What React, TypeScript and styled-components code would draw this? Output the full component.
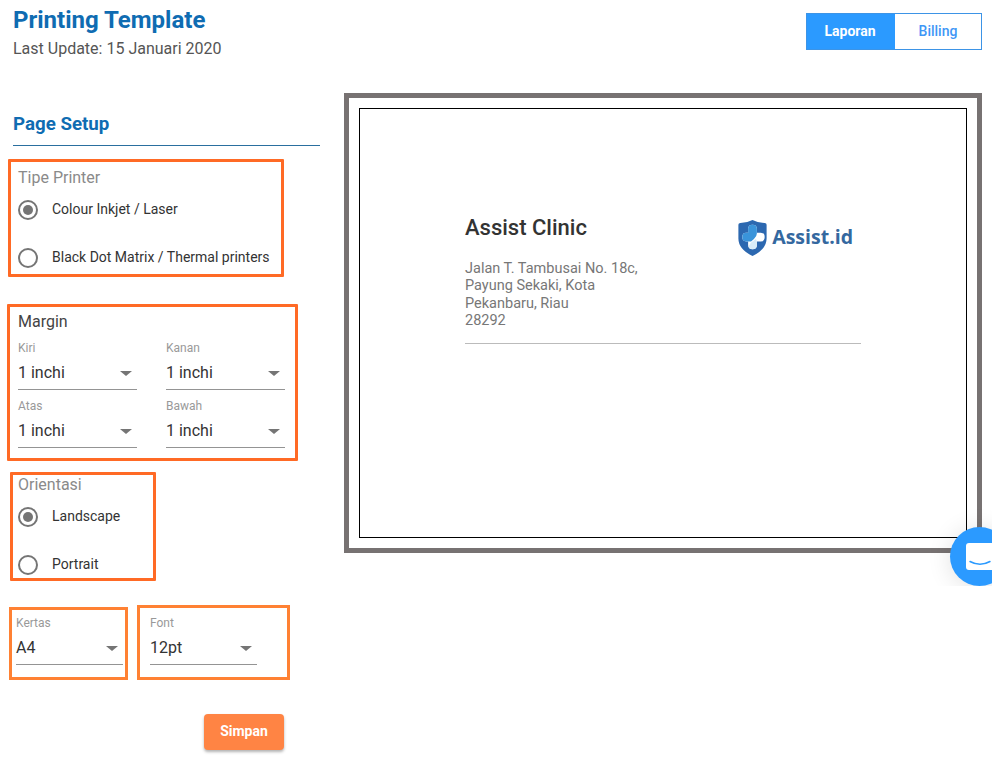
import styled, { createGlobalStyle } from 'styled-components';

const GlobalStyle = createGlobalStyle`
  html, body {
    margin: 0;
    padding: 0;
    background: white;
    font-family: Roboto, "Liberation Sans", sans-serif;
  }
`;

function Radio({ label, checked }: { label: string; checked?: boolean }) {
  return (
    <RadioRow>
      <RadioCircle>{checked && <RadioDot />}</RadioCircle>
      <RadioText>{label}</RadioText>
    </RadioRow>
  );
}

function Select({ label, value, width }: { label: string; value: string; width: number }) {
  return (
    <SelectBox $width={width}>
      <SelectLabel>{label}</SelectLabel>
      <SelectValue>
        {value}
        <Caret />
      </SelectValue>
    </SelectBox>
  );
}

function Logo() {
  return (
    <LogoWrap>
      <svg width="29" height="36" viewBox="0 0 29 37">
        <path d="M0 5 Q0 3 2 3 Q9 3 14.5 0 Q20 3 27 3 Q29 3 29 5 L29 19 Q29 30 14.5 37 Q0 30 0 19 Z" fill="#2c68b0" />
        <path d="M10 9 Q10 5 14.5 5 Q19 5 19 9 L19 13 L23 13 Q27 13 27 17.5 Q27 22 23 22 L19 22 L19 26 Q19 30 14.5 30 Q10 30 10 26 L10 22 L8 22 Q4 22 4 17.5 Q4 13 8 13 L10 13 Z" fill="#ffffff" />
        <path d="M13 22 L8 22 Q4 22 4 17.5 Q4 13 8 13 L10 13 L10 9 Q10 5 14.5 5 Q19 5 19 9 L19 14 Q19 17 16 19.5 Z" fill="#3a94da" />
        <path d="M13 23 L18 19.5 L19 22 L19 26 Q19 30 14.5 30 Q11 30 10.5 27 Z" fill="#d8ecf8" />
      </svg>
      <LogoText>Assist.id</LogoText>
    </LogoWrap>
  );
}

function App() {
  return (
    <>
      <GlobalStyle />
      <Page>
        <Header>
          <div>
            <Title>Printing Template</Title>
            <Updated>Last Update: 15 Januari 2020</Updated>
          </div>
          <Toggle>
            <ToggleButton $active>Laporan</ToggleButton>
            <ToggleButton>Billing</ToggleButton>
          </Toggle>
        </Header>
        <Body>
          <Sidebar>
            <SetupTitle>Page Setup</SetupTitle>
            <PrinterBox>
              <GroupTitle>Tipe Printer</GroupTitle>
              <RadioList>
                <Radio label="Colour Inkjet / Laser" checked />
                <Radio label="Black Dot Matrix / Thermal printers" />
              </RadioList>
            </PrinterBox>
            <MarginBox>
              <MarginTitle>Margin</MarginTitle>
              <MarginGrid>
                <Select label="Kiri" value="1 inchi" width={119} />
                <Select label="Kanan" value="1 inchi" width={119} />
                <Select label="Atas" value="1 inchi" width={119} />
                <Select label="Bawah" value="1 inchi" width={119} />
              </MarginGrid>
            </MarginBox>
            <OrientationBox>
              <GroupTitle>Orientasi</GroupTitle>
              <RadioList>
                <Radio label="Landscape" checked />
                <Radio label="Portrait" />
              </RadioList>
            </OrientationBox>
            <PaperRow>
              <PaperBox>
                <Select label="Kertas" value="A4" width={107} />
              </PaperBox>
              <FontBox>
                <Select label="Font" value="12pt" width={107} />
              </FontBox>
            </PaperRow>
            <SaveButton>Simpan</SaveButton>
          </Sidebar>
          <Preview>
            <Sheet>
              <SheetTop>
                <Clinic>
                  <ClinicName>Assist Clinic</ClinicName>
                  <Address>
                    Jalan T. Tambusai No. 18c,
                    <br />
                    Payung Sekaki, Kota
                    <br />
                    Pekanbaru, Riau
                    <br />
                    28292
                  </Address>
                </Clinic>
                <Logo />
              </SheetTop>
              <SheetLine />
            </Sheet>
          </Preview>
        </Body>
        <ChatClip>
          <ChatBubble>
            <ChatFace>
              <svg width="22" height="7" viewBox="0 0 22 7">
                <path d="M1 1.5 Q11 7 21 1.5" fill="none" stroke="#2b9aff" strokeWidth="1.5" strokeLinecap="round" />
              </svg>
            </ChatFace>
          </ChatBubble>
        </ChatClip>
      </Page>
    </>
  );
}

const Page = styled.div`
  position: relative;
  width: 994px;
  height: 776px;
  overflow: hidden;
  background: white;
`;

const Header = styled.div`
  display: flex;
  justify-content: space-between;
  align-items: flex-start;
  height: 93px;
  padding: 6px 12px 0 13px;
  box-sizing: border-box;
`;

const Title = styled.div`
  font-size: 24px;
  line-height: 28px;
  font-weight: 700;
  color: #0f6cb2;
`;

const Updated = styled.div`
  margin-top: 3px;
  font-size: 16px;
  line-height: 24px;
  color: #555555;
`;

const Toggle = styled.div`
  display: flex;
  margin-top: 7px;
  width: 176px;
  height: 37px;
  box-sizing: border-box;
  border: 1px solid #3d94e6;
`;

const ToggleButton = styled.div<{ $active?: boolean }>`
  display: flex;
  align-items: center;
  justify-content: center;
  box-sizing: border-box;
  width: ${(p) => (p.$active ? '88px' : '86px')};
  padding: ${(p) => (p.$active ? '0 2px 2px 0' : '0 0 2px 0')};
  font-size: 14px;
  font-weight: ${(p) => (p.$active ? 700 : 500)};
  color: ${(p) => (p.$active ? 'white' : '#3f97f6')};
  background: ${(p) => (p.$active ? '#2b9aff' : 'white')};
`;

const Body = styled.div`
  display: flex;
  justify-content: space-between;
  padding-right: 12px;
`;

const Sidebar = styled.div`
  width: 344px;
`;

const SetupTitle = styled.div`
  margin: 0 24px 0 13px;
  height: 53px;
  box-sizing: border-box;
  padding-top: 19px;
  border-bottom: 1px solid #2a6f9f;
  font-size: 18.72px;
  line-height: 24px;
  font-weight: 700;
  color: #0f6cb2;
`;

const OrangeBox = styled.div`
  box-sizing: border-box;
  border: 3px solid #ff6a25;
  border-radius: 1px;
`;

const PrinterBox = styled(OrangeBox)`
  width: 276px;
  height: 118px;
  margin: 13px 0 0 8px;
  padding: 6px 7px;
`;

const GroupTitle = styled.div`
  font-size: 16px;
  line-height: 19px;
  color: #8a8a8a;
`;

const RadioList = styled.div`
  display: flex;
  flex-direction: column;
  gap: 24px;
  margin-top: 11px;
`;

const RadioRow = styled.div`
  display: flex;
  align-items: center;
  height: 24px;
  gap: 14px;
`;

const RadioCircle = styled.div`
  display: flex;
  align-items: center;
  justify-content: center;
  width: 20px;
  height: 20px;
  box-sizing: border-box;
  border: 2px solid #757575;
  border-radius: 50%;
`;

const RadioDot = styled.div`
  width: 10px;
  height: 10px;
  border-radius: 50%;
  background: #757575;
`;

const RadioText = styled.div`
  margin-top: -2px;
  font-size: 14px;
  line-height: 20px;
  color: #333333;
  white-space: nowrap;
`;

const MarginBox = styled(OrangeBox)`
  width: 291px;
  height: 157px;
  margin: 27px 0 0 7px;
  padding: 5px 8px;
`;

const MarginTitle = styled.div`
  font-size: 16px;
  line-height: 19px;
  color: #444444;
`;

const MarginGrid = styled.div`
  display: grid;
  grid-template-columns: 119px 119px;
  column-gap: 29px;
  row-gap: 9px;
  margin-top: 10px;
`;

const SelectBox = styled.div<{ $width: number }>`
  width: ${(p) => p.$width}px;
`;

const SelectLabel = styled.div`
  font-size: 12px;
  line-height: 14px;
  color: #999999;
`;

const SelectValue = styled.div`
  display: flex;
  align-items: center;
  justify-content: space-between;
  height: 32px;
  margin-top: 2px;
  padding: 0 5px 0 0;
  border-bottom: 1px solid #949494;
  font-size: 16px;
  line-height: 20px;
  color: #333333;
`;

const Caret = styled.div`
  width: 0;
  height: 0;
  border-left: 6px solid transparent;
  border-right: 6px solid transparent;
  border-top: 5px solid #757575;
`;

const OrientationBox = styled(OrangeBox)`
  width: 146px;
  height: 109px;
  margin: 11px 0 0 10px;
  padding: 0 5px;
`;

const PaperRow = styled.div`
  display: flex;
  align-items: flex-end;
  gap: 9px;
  margin: 24px 0 0 9px;
`;

const PaperBox = styled.div`
  box-sizing: border-box;
  width: 119px;
  height: 73px;
  padding: 6px 4px;
  border: 3px solid #ff8133;
`;

const FontBox = styled(PaperBox)`
  width: 153px;
  height: 75px;
  padding: 8px 10px;
`;

const SaveButton = styled.div`
  display: flex;
  align-items: center;
  justify-content: center;
  box-sizing: border-box;
  width: 80px;
  height: 36px;
  margin: 34px 0 0 204px;
  padding-bottom: 2px;
  border-radius: 4px;
  background: #ff8444;
  box-shadow: 0 2px 3px rgba(0, 0, 0, 0.3);
  color: white;
  font-size: 14px;
  font-weight: 700;
`;

const Preview = styled.div`
  box-sizing: border-box;
  width: 638px;
  height: 460px;
  padding: 10px;
  border: 5px solid #777272;
`;

const Sheet = styled.div`
  box-sizing: border-box;
  height: 430px;
  padding: 104px 105px 0;
  border: 1px solid black;
`;

const SheetTop = styled.div`
  display: flex;
  justify-content: space-between;
  align-items: flex-start;
  height: 130px;
`;

const Clinic = styled.div``;

const ClinicName = styled.div`
  font-size: 22px;
  line-height: 30px;
  font-weight: 500;
  color: #333333;
`;

const Address = styled.div`
  margin-top: 16.5px;
  font-size: 14.5px;
  line-height: 17.5px;
  color: #777777;
`;

const SheetLine = styled.div`
  border-bottom: 1px solid #bbbbbb;
`;

const LogoWrap = styled.div`
  display: flex;
  align-items: center;
  gap: 5px;
  margin: 7px 8px 0 0;
`;

const LogoText = styled.div`
  margin-top: -2px;
  font-family: "Open Sans", sans-serif;
  font-size: 19.5px;
  line-height: 36px;
  font-weight: 700;
  color: #34689f;
`;

const ChatClip = styled.div`
  position: absolute;
  left: 920px;
  top: 497px;
  width: 72px;
  height: 89px;
  overflow: hidden;
`;

const ChatBubble = styled.div`
  display: flex;
  align-items: center;
  width: 59px;
  height: 59px;
  margin: 30px 0 0 30px;
  border-radius: 50%;
  background: #2b9aff;
  box-shadow: 0 2px 24px rgba(0, 0, 0, 0.12);
`;

const ChatFace = styled.div`
  display: flex;
  align-items: flex-end;
  justify-content: center;
  flex-shrink: 0;
  width: 28px;
  height: 27px;
  margin-left: 16px;
  padding-bottom: 3px;
  box-sizing: border-box;
  border-radius: 3px;
  background: white;
`;

export default App;
